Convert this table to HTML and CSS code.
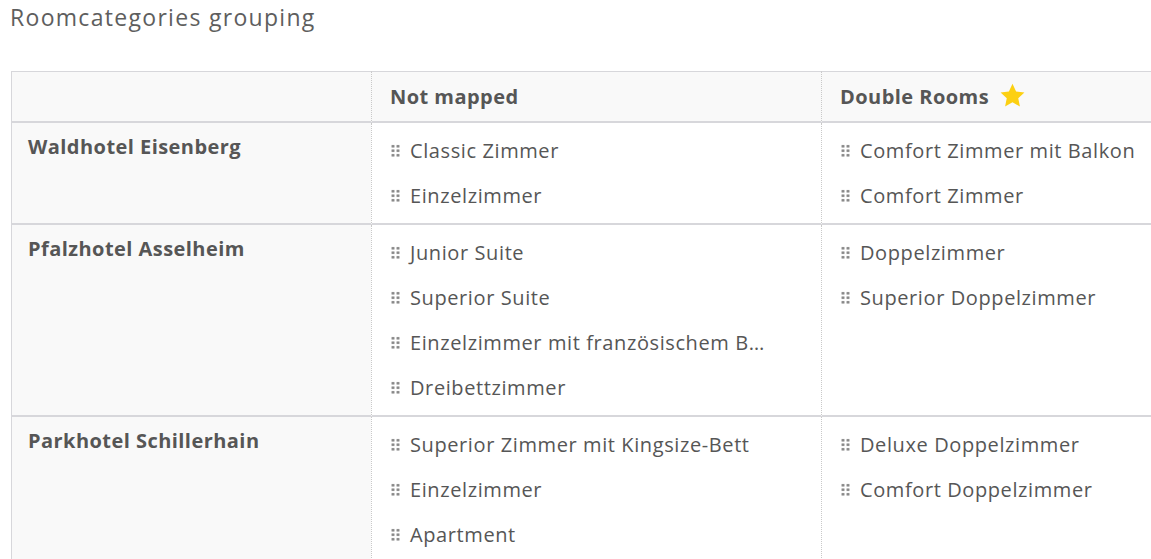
FILE: index.html
```html
<!DOCTYPE html>
<html lang="de">
<head>
    <meta charset="UTF-8">
    <meta name="viewport" content="width=device-width, initial-scale=1.0">
    <title>Roomcategories grouping</title>
    <link rel="stylesheet" href="styles.css">
</head>
<body>
    <h2 class="titel">Roomcategories grouping</h2>

    <div class="raster">
        <!-- Kopfzeile -->
        <div class="zelle kopf hotel"></div>
        <div class="zelle kopf">Not mapped</div>
        <div class="zelle kopf">Double Rooms
            <svg class="stern" viewBox="0 0 24 24" width="27" height="27"><path d="M12 1.6l3.2 6.9 7.4.8-5.5 5.1 1.5 7.4L12 18.1l-6.6 3.7 1.5-7.4L1.4 9.3l7.4-.8z"/></svg>
        </div>

        <!-- Waldhotel -->
        <div class="zelle hotel">Waldhotel Eisenberg</div>
        <div class="zelle liste">
            <div class="eintrag"><span class="griff"></span><span class="name">Classic Zimmer</span></div>
            <div class="eintrag"><span class="griff"></span><span class="name">Einzelzimmer</span></div>
        </div>
        <div class="zelle liste">
            <div class="eintrag"><span class="griff"></span><span class="name">Comfort Zimmer mit Balkon</span></div>
            <div class="eintrag"><span class="griff"></span><span class="name">Comfort Zimmer</span></div>
        </div>

        <!-- Pfalzhotel -->
        <div class="zelle hotel">Pfalzhotel Asselheim</div>
        <div class="zelle liste">
            <div class="eintrag"><span class="griff"></span><span class="name">Junior Suite</span></div>
            <div class="eintrag"><span class="griff"></span><span class="name">Superior Suite</span></div>
            <div class="eintrag"><span class="griff"></span><span class="name" title="Einzelzimmer mit französischem Bett">Einzelzimmer mit französischem B…</span></div>
            <div class="eintrag"><span class="griff"></span><span class="name">Dreibettzimmer</span></div>
        </div>
        <div class="zelle liste">
            <div class="eintrag"><span class="griff"></span><span class="name">Doppelzimmer</span></div>
            <div class="eintrag"><span class="griff"></span><span class="name">Superior Doppelzimmer</span></div>
        </div>

        <!-- Parkhotel -->
        <div class="zelle hotel">Parkhotel Schillerhain</div>
        <div class="zelle liste">
            <div class="eintrag"><span class="griff"></span><span class="name">Superior Zimmer mit Kingsize-Bett</span></div>
            <div class="eintrag"><span class="griff"></span><span class="name">Einzelzimmer</span></div>
            <div class="eintrag"><span class="griff"></span><span class="name">Apartment</span></div>
        </div>
        <div class="zelle liste">
            <div class="eintrag"><span class="griff"></span><span class="name">Deluxe Doppelzimmer</span></div>
            <div class="eintrag"><span class="griff"></span><span class="name">Comfort Doppelzimmer</span></div>
        </div>
    </div>
</body>
</html>
```

FILE: styles.css
```css
body {
    font-family: "Open Sans", Arial, sans-serif;
    color: #565656;
    background-color: #fff;
    margin: 0;
    padding: 0 0 0 11px;
    overflow: hidden;
}

.titel {
    font-size: 23px;
    font-weight: 400;
    letter-spacing: 1.3px;
    color: #5e5e5e;
    margin: 0 0 0 -1px;
    padding-top: 2px;
    line-height: 30px;
    height: 69px;
}

.raster {
    display: grid;
    grid-template-columns: 360px 450px 450px;
    width: 1260px;
}

.zelle {
    border-left: 1px dotted #c9c9c9;
    border-bottom: 2px solid #d7d7db;
}

.zelle.hotel {
    border-left: 1px solid #d7d7db;
    background-color: #f9f9f9;
    font-weight: 700;
    font-size: 20px;
    letter-spacing: 0.45px;
    padding: 12px 16px 0;
    line-height: 24px;
}

.kopf {
    border-top: 1px solid #d7d7db;
    background-color: #f9f9f9;
    height: 49px;
    display: flex;
    align-items: center;
    padding: 0 18px;
    font-weight: 700;
    font-size: 20px;
    letter-spacing: 0.45px;
}

.kopf.hotel {
    padding: 0;
}

.stern {
    margin-left: 10px;
    margin-top: -2px;
    fill: #fcd012;
}

.liste {
    padding: 5px 0 5px 19px;
}

.eintrag {
    display: flex;
    align-items: center;
    height: 45px;
    font-size: 20px;
    letter-spacing: 0.6px;
}

.griff {
    width: 9px;
    height: 13px;
    margin-right: 10px;
    background-image: radial-gradient(circle, #858585 1.3px, transparent 1.5px);
    background-size: 5px 4.5px;
    background-position: -0.5px 0;
    flex-shrink: 0;
}

.name {
    white-space: nowrap;
}
```
